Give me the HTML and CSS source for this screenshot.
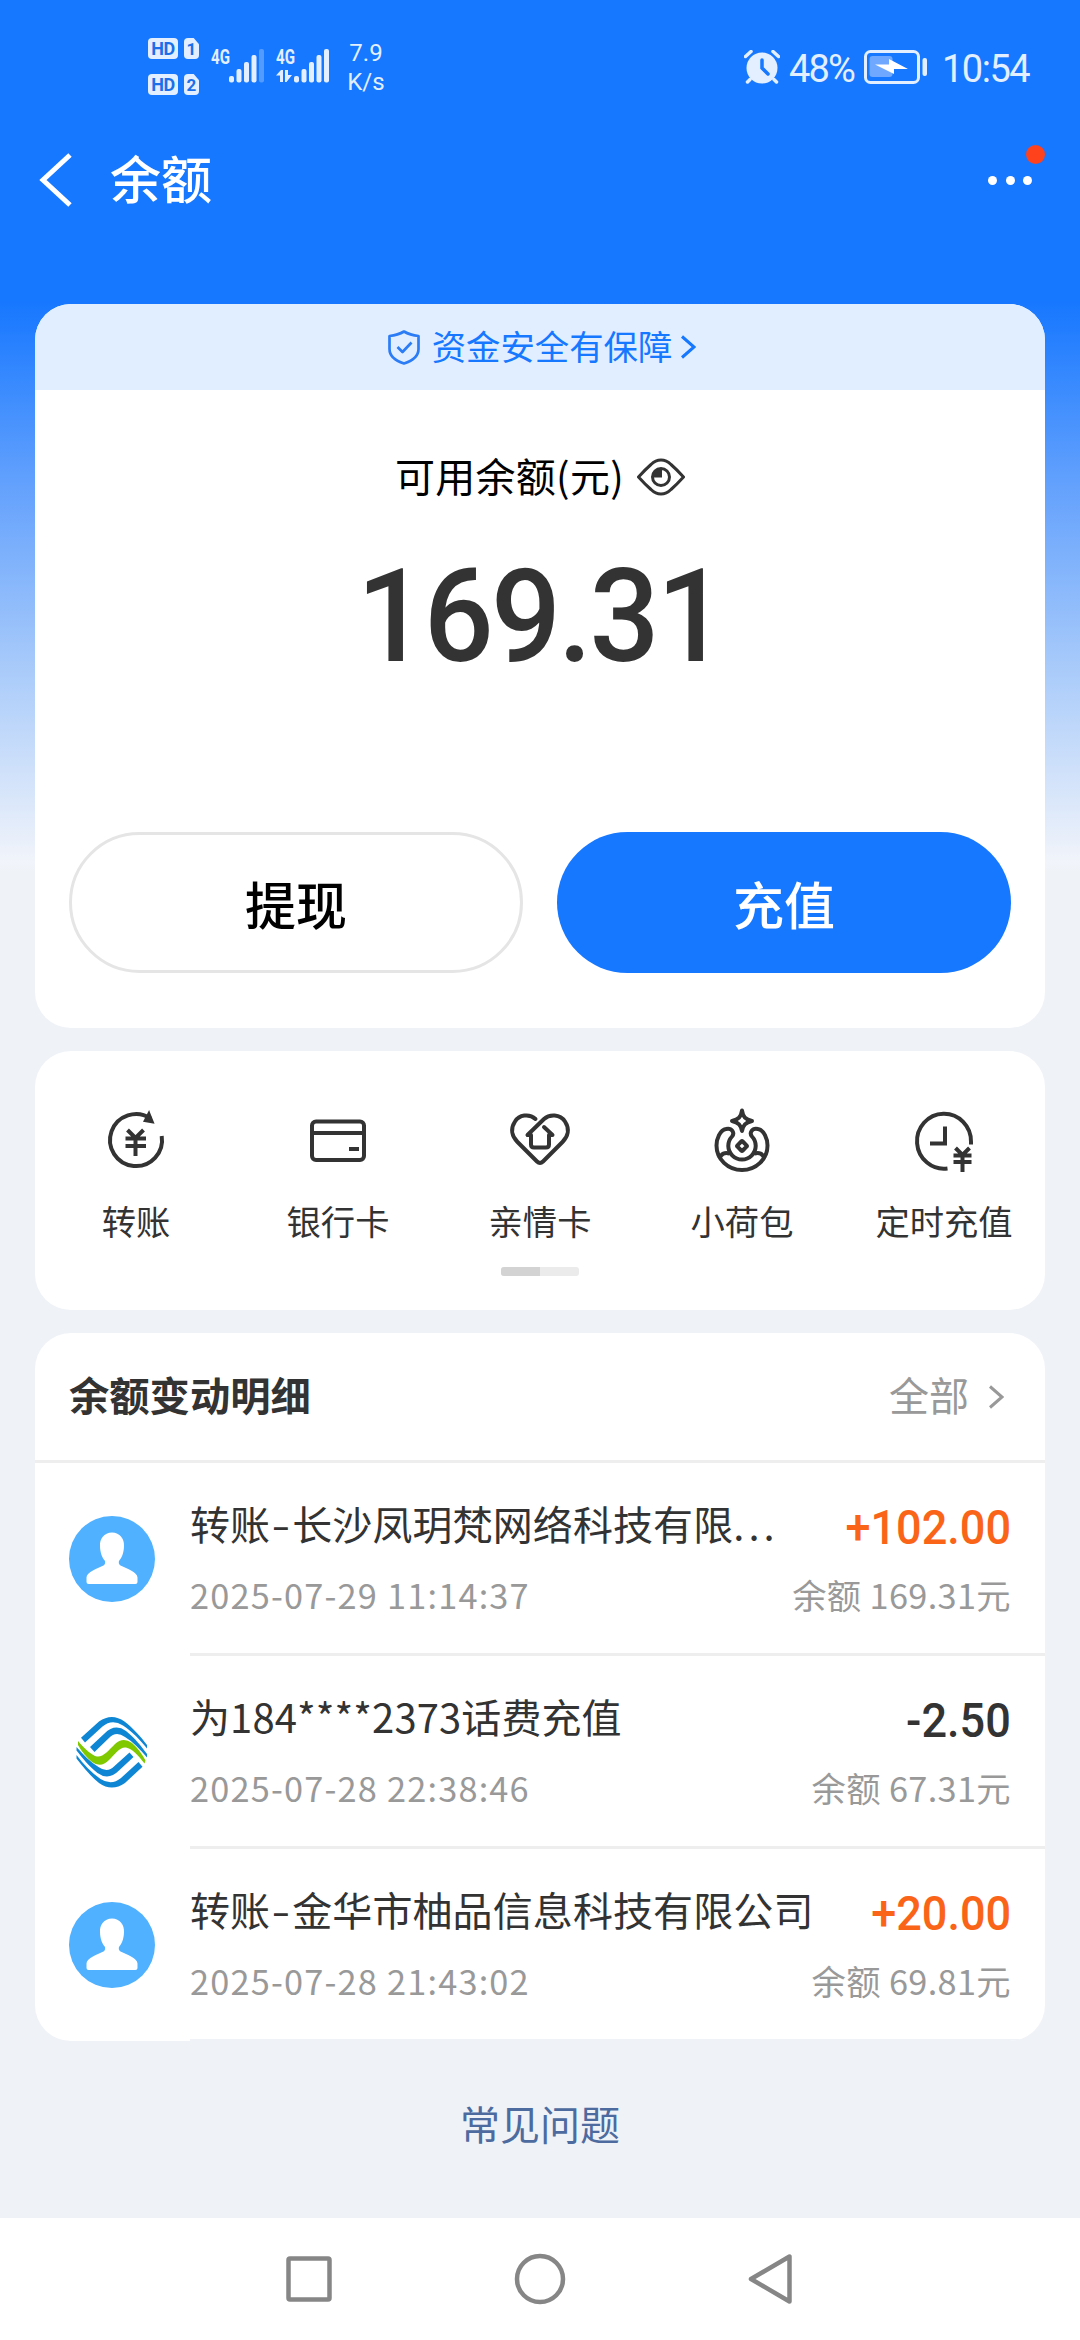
FILE: index.html
```html
<!DOCTYPE html>
<html lang="zh-CN">
<head>
<meta charset="utf-8">
<title>余额</title>
<link rel="stylesheet" href="styles.css">
</head>
<body>
<svg class="defs" width="0" height="0" aria-hidden="true">
  <symbol id="avatar" viewBox="0 0 86 86">
    <circle cx="43" cy="43" r="43" fill="#4fb1ff"/>
    <path fill="#fff" d="M43 16.500C51 16.500 55.500 23 55 30C55 37 52.500 42 50.300 44.500C49.300 46 49.800 48.500 51.500 49.500C57 52 68.500 56 68.500 61.500V66Q68.500 68 66.500 68H19.500Q17.500 68 17.500 66V61.500C17.500 56 29 52 34.500 49.500C36.200 48.500 36.700 46 35.700 44.500C33.500 42 31 37 31 30C30.500 23 35 16.500 43 16.500Z"/>
  </symbol>
  <symbol id="chevron" viewBox="0 0 18 26">
    <path d="M2 2.500 14 13 2 23.500" fill="none" stroke="currentColor" stroke-width="3"/>
  </symbol>
</svg>
<div class="screen">
  <header class="status">
    <div class="status-left">
      <div class="hd-col">
        <div class="hd-row"><span class="hd">HD</span><span class="sim">1</span></div>
        <div class="hd-row"><span class="hd">HD</span><span class="sim">2</span></div>
      </div>
      <div class="signal">
        <span class="net">4G</span>
        <svg width="54" height="34" viewBox="0 0 54 34" fill="#e3efff">
          <rect x="18" y="27" width="5" height="6.500" rx="2"/><rect x="25.500" y="20" width="5" height="13.500" rx="2"/><rect x="33" y="13" width="5" height="20.500" rx="2"/><rect x="40.500" y="6" width="5" height="27.500" rx="2"/><rect x="48" y="0" width="5" height="33.500" rx="2" opacity=".3"/>
        </svg>
      </div>
      <div class="signal second">
        <span class="net">4G</span>
        <svg width="54" height="34" viewBox="0 0 54 34" fill="#e3efff">
          <path d="M0 26.500 5 21H7V33H4V26.500ZM9 21H12V26H16L10.500 33H9Z"/>
          <rect x="18" y="27" width="5" height="6.500" rx="2"/><rect x="25.500" y="20" width="5" height="13.500" rx="2"/><rect x="33" y="13" width="5" height="20.500" rx="2"/><rect x="40.500" y="6" width="5" height="27.500" rx="2"/><rect x="48" y="0" width="5" height="33.500" rx="2"/>
        </svg>
      </div>
      <div class="speed"><span>7.9</span><span>K/s</span></div>
    </div>
    <div class="status-right">
      <svg class="alarm" width="36" height="34" viewBox="0 0 36 34">
        <circle cx="18" cy="18" r="15.500" fill="#e3efff"/>
        <path d="M1.500 6.500 7 1.500M34.500 6.500 29 1.500M6 29.500 3.500 32M30 29.500 32.500 32" stroke="#e3efff" stroke-width="3.500" stroke-linecap="round"/>
        <path d="M18 10V18L24 24" fill="none" stroke="#1677ff" stroke-width="3.500" stroke-linecap="round"/>
      </svg>
      <span class="percent">48%</span>
      <svg class="battery" width="64" height="34" viewBox="0 0 64 34">
        <rect x="1.500" y="1.500" width="53" height="31" rx="5" fill="none" stroke="#e3efff" stroke-width="3"/>
        <rect x="5.500" y="6" width="23" height="21" rx="3" fill="#6ea8ff"/>
        <path d="M11 14.500 25 14.500V9L44 19H30V24Z" fill="#fff"/>
        <rect x="58.500" y="8" width="4.500" height="18" rx="2" fill="#e3efff"/>
      </svg>
      <span class="time">10:54</span>
    </div>
  </header>

  <nav class="titlebar">
    <svg class="back" width="34" height="54" viewBox="0 0 34 54"><path d="M31 2 4 27 31 52" fill="none" stroke="#fff" stroke-width="5"/></svg>
    <h1>余额</h1>
    <div class="more"><i></i><i></i><i></i><b class="badge"></b></div>
  </nav>

  <main>
    <section class="card balance">
      <div class="guard">
        <svg width="32" height="35" viewBox="0 0 32 35" fill="none" stroke="#2c7cf6" stroke-width="2.700" stroke-linejoin="round"><path d="M16 1.500C20 4 25 5.500 30.500 6V19C30.500 26 24 31 16 33.500C8 31 1.500 26 1.500 19V6C7 5.500 12 4 16 1.500Z"/><path d="M9.500 17 14.500 22 23.500 12.500"/></svg>
        <span>资金安全有保障</span>
        <svg class="guard-arrow" width="18" height="26"><use href="#chevron"/></svg>
      </div>
      <div class="label"><span>可用余额(元)</span>
        <svg width="48" height="38" viewBox="0 0 48 38" fill="none" stroke="#333" stroke-width="3"><path stroke-linejoin="round" d="M1.500 19C6 14 10 10 14 6.500C20 .500 28 .500 34 6.500C38 10 42 14 46.500 19C42 24 38 28 34 31.500C28 37.500 20 37.500 14 31.500C10 28 6 24 1.500 19Z"/><circle cx="24" cy="19" r="8.500"/><path d="M24 12V18.500H17A7 7 0 0 1 24 12Z" fill="#333" stroke-width="2"/></svg>
      </div>
      <div class="amount">169.31</div>
      <div class="actions">
        <button class="btn ghost">提现</button>
        <button class="btn solid">充值</button>
      </div>
    </section>

    <section class="card tools">
      <div class="tool-row">
        <div class="tool">
          <svg viewBox="0 0 66 66"><path d="M47.500 10.500A26 26 0 1 0 58.700 28" /><path d="M46 4.500 50 14.500 41.500 13Z" fill="#333" stroke-width="2"/><path d="M24.500 22 32.500 30 40.500 22M22.500 30.500H43M22.500 38H43M32.500 30V48"/></svg>
          <span>转账</span>
        </div>
        <div class="tool">
          <svg viewBox="0 0 66 66"><rect x="7" y="13.500" width="52" height="38.500" rx="4"/><path d="M7 25H59M44 41H54"/></svg>
          <span>银行卡</span>
        </div>
        <div class="tool">
          <svg viewBox="0 0 66 66"><path stroke-linecap="round" stroke-linejoin="round" d="M28.500 11C22 5 12 7 8 13.500C3 21 5 28.500 10.500 34L30 53.500Q33 56.500 36 53.500L55.500 34C61 28.500 63 21 58 13.500C53 6 42.500 6 37 11L20.500 27H24V36.500Q24 39.500 27 39.500H39Q42 39.500 42 36.500V27H45.500L37 19"/></svg>
          <span>亲情卡</span>
        </div>
        <div class="tool">
          <svg viewBox="0 0 66 66" stroke-linejoin="round"><path d="M33 2.500C34 9 36.500 11.500 43 13C36.500 14.500 34 17 33 23C32 17 29.500 14.500 23 13C29.500 11.500 32 9 33 2.500Z"/><path d="M17 21C11 22 7.500 31 7.500 37.500A25.500 24.500 0 0 0 58.500 37.500C58.500 31 55 22 49 21C43 19.500 40 25 43 28.500A13.700 13.700 0 1 1 23 28.500C26 25 23 19.500 17 21Z"/><path d="M10.500 50.500C12 45.500 16 44 20.500 45.500M55.500 50.500C54 45.500 50 44 45.500 45.500"/><rect x="29.300" y="34.300" width="7.400" height="7.400" rx="1" transform="rotate(45 33 38)"/></svg>
          <span>小荷包</span>
        </div>
        <div class="tool">
          <svg viewBox="0 0 66 66"><path d="M60 36.500V34A27 27.500 0 1 0 36.500 60.500M34 18.500V35.500H19"/><path d="M44.500 40 51.500 47 58.500 40M42.500 47.500H60.500M42.500 54H60.500M51.500 47V64"/></svg>
          <span>定时充值</span>
        </div>
      </div>
      <div class="pager"><i></i></div>
    </section>

    <section class="card history">
      <div class="history-head">
        <h2>余额变动明细</h2>
        <div class="all"><span>全部</span><svg width="18" height="26"><use href="#chevron"/></svg></div>
      </div>
      <div class="entry">
        <svg class="pic" viewBox="0 0 86 86"><use href="#avatar"/></svg>
        <div class="entry-body">
          <div class="line"><span class="name">转账<span class="dash">-</span>长沙凤玥梵网络科技有限<span class="dots">...</span></span><strong class="in">+102.00</strong></div>
          <div class="line meta"><span class="date">2025-07-29 11:14:37</span><span>余额 169.31元</span></div>
        </div>
      </div>
      <div class="entry">
        <svg class="pic" viewBox="0 0 86 86">
          <g fill="#0e86d4">
            <path d="M12 28.700 30 12.500Q42.800 3.500 55.500 12.500C64 19 72 28 78 36V39.500C71 31 64 23 54 16.500Q43 9.500 33.500 17.500L16 33.500Z"/>
            <path d="M21 38 35.500 24.500Q46 14 57 22C66 29 72 37 78 45V48.500C71 40 64 33 56 28Q47 21.500 40 29L25.500 43Z"/>
            <path d="M73.500 57.700 56 74Q42.800 83 30 74C21.500 67.500 13.500 57 7.500 49.500V46C14.500 55 22 63.500 31.500 70Q42.500 77 52 69L69.500 53Z"/>
            <path d="M64.500 48 50 61.500Q39.500 72 28.500 64C19.500 57 13.500 49 7.500 41.500V38C14.500 46 21.500 53 29.500 58Q38.500 64.500 45.500 57L60.500 43.500Z"/>
          </g>
          <path fill="#80c800" d="M9 32C16 40 23 46.500 28 47.500C34 48.500 40 41 46 35Q54 27.500 63 34C69 39 73 45 76.500 51.500L75.500 54.500C69 46 63 39.500 57 38.500C51 37.500 46 45 40 51Q32 59.500 23 53C17 48 13 43 9 36Z"/>
        </svg>
        <div class="entry-body">
          <div class="line"><span class="name">为184****2373话费充值</span><strong>-2.50</strong></div>
          <div class="line meta"><span class="date">2025-07-28 22:38:46</span><span>余额 67.31元</span></div>
        </div>
      </div>
      <div class="entry">
        <svg class="pic" viewBox="0 0 86 86"><use href="#avatar"/></svg>
        <div class="entry-body">
          <div class="line"><span class="name">转账<span class="dash">-</span>金华市柚品信息科技有限公司</span><strong class="in">+20.00</strong></div>
          <div class="line meta"><span class="date">2025-07-28 21:43:02</span><span>余额 69.81元</span></div>
        </div>
      </div>
    </section>
    <a class="faq">常见问题</a>
  </main>

  <footer class="navkeys">
    <svg viewBox="0 0 54 54"><rect x="6.500" y="6.500" width="41" height="41" rx="1.500"/></svg>
    <svg viewBox="0 0 54 54"><circle cx="27" cy="27" r="23"/></svg>
    <svg viewBox="0 0 54 54"><path stroke-linejoin="round" d="M45.500 4.500V49.500L7 27Z"/></svg>
  </footer>
</div>
</body>
</html>
```
FILE: styles.css
```css
* { box-sizing: border-box; margin: 0; padding: 0; }
body { font-family: "Noto Sans CJK SC", sans-serif; color: #333; }
svg { display: block; flex: none; }
.defs { position: absolute; }
.screen {
  width: 1080px; height: 2340px; overflow: hidden;
  display: flex; flex-direction: column;
  background: linear-gradient(#1677ff 0, #1677ff 300px, #61a0fd 480px, #a9cbfa 670px, #f1f4fa 862px, #eff2f7 872px);
}

.status { height: 134px; padding: 38px 50px 0 148px; display: flex; justify-content: space-between; color: #e3efff; font-family: Roboto, sans-serif; }
.status-left, .status-right { display: flex; align-items: flex-start; }
.hd-col { display: flex; flex-direction: column; gap: 15px; width: 63px; }
.hd-row { display: flex; gap: 6px; height: 21px; }
.hd, .sim { background: #e3efff; color: #1c6fe8; border-radius: 4px; font-weight: 700; text-align: center; line-height: 22px; }
.hd { width: 30px; font-size: 18px; letter-spacing: -.5px; }
.sim { width: 15px; font-size: 17px; clip-path: polygon(0 0, 65% 0, 100% 30%, 100% 100%, 0 100%); }
.signal { display: grid; margin-top: 11px; width: 54px; }
.signal > * { grid-area: 1 / 1; }
.signal.second { margin-left: 11px; }
.net { font-size: 21px; line-height: 16px; font-weight: 700; transform: scaleX(.72); transform-origin: 0 0; width: 26px; }
.speed { display: flex; flex-direction: column; align-items: center; margin: 1px 0 0 17px; width: 38px; font-size: 24px; line-height: 28.500px; }
.alarm { margin-top: 12px; }
.percent, .time { font-size: 38px; line-height: 44px; margin-top: 9px; white-space: nowrap; }
.percent { width: 75px; padding-left: 9px; letter-spacing: -1.800px; }
.battery { margin: 12px 0 0 9px; }
.time { width: 88px; margin-left: 14px; letter-spacing: -1.500px; }

.titlebar { height: 170px; padding: 0 48px 0 39px; display: flex; align-items: flex-start; }
.back { margin-top: 19px; }
.titlebar h1 { color: #fff; font-size: 51px; line-height: 72px; font-weight: 500; margin: 7px 0 0 37px; flex: 1; }
.more { position: relative; display: flex; gap: 8.300px; margin-top: 42px; }
.more i { width: 9px; height: 9px; border-radius: 50%; background: #fff; }
.badge { position: absolute; width: 19px; height: 19px; border-radius: 50%; background: #ff411c; right: -13px; top: -31px; }

main { padding: 0 35px; flex: 1; display: flex; flex-direction: column; }
.card { background: #fff; border-radius: 36px; overflow: hidden; flex: none; }
.balance { height: 724px; display: flex; flex-direction: column; align-items: center; }
.guard { height: 86px; width: 100%; background: #e1eeff; color: #1677ff; display: flex; align-items: center; justify-content: center; font-size: 34.400px; line-height: 50px; gap: 12px; padding-left: 6px; }
.guard span { margin-top: -4px; }
.guard-arrow { margin-left: -4px; }
.label { display: flex; align-items: center; margin-top: 57px; height: 60px; color: #000; font-size: 40px; line-height: 60px; gap: 13px; }
.label span { margin-top: -5px; letter-spacing: .3px; }
.amount { font: 500 129px/150px Roboto, sans-serif; letter-spacing: -3px; margin-top: 35px; transform: scaleX(.955); }
.actions { display: grid; grid-template-columns: 454px 454px; gap: 34px; margin-top: 140px; }
.btn { height: 141px; border-radius: 71px; font: 500 51px/76px "Noto Sans CJK SC", sans-serif; }
.ghost { background: #fff; border: 3px solid #e5e5e5; color: #000; }
.solid { background: #1677ff; border: 0; color: #fff; }

.tools { height: 259px; margin-top: 23px; padding-top: 57px; }
.tool-row { display: grid; grid-template-columns: repeat(5, 1fr); }
.tool { display: flex; flex-direction: column; align-items: center; font-size: 34.300px; line-height: 50px; white-space: nowrap; }
.tool svg { width: 66px; height: 66px; fill: none; stroke: #333; stroke-width: 4; }
.tool span { margin-top: 21px; }
.pager { width: 78px; height: 9px; border-radius: 3px; background: #ebebeb; margin: 22px auto 0; overflow: hidden; }
.pager i { display: block; width: 39px; height: 9px; background: #d3d3d3; }

.history { height: 708px; margin-top: 23px; }
.history-head { height: 130px; padding: 0 39px 0 34px; display: flex; justify-content: space-between; align-items: center; border-bottom: 3px solid #eee; }
.history-head h2 { font-size: 40.300px; line-height: 60px; font-weight: 700; margin-top: -5px; }
.all { display: flex; align-items: center; gap: 19px; color: #999; font-size: 40px; line-height: 60px; }
.all span { margin-top: -5px; }
.entry { display: flex; height: 193px; padding-left: 34px; }
.pic { width: 86px; height: 86px; margin-top: 53px; }
.entry-body { margin-left: 35px; flex: 1; padding: 30px 34px 0 0; border-bottom: 3px solid #eee; }
.entry:last-child .entry-body { border-color: #eff2f7; }
.line { display: flex; justify-content: space-between; height: 60px; line-height: 60px; font-size: 40px; white-space: nowrap; }
.line strong { font: 500 49px/69px Roboto, sans-serif; transform: scaleX(.92); transform-origin: 100% 0; }
.line .in { color: #fa6419; }
.dash { display: inline-block; width: 22px; text-align: center; transform: scaleX(1.35); }
.name { letter-spacing: .1px; }
.dots { letter-spacing: 4px; }
.meta { margin-top: 15px; height: 52px; line-height: 52px; font-size: 34.300px; color: #999; letter-spacing: .35px; }
.date { letter-spacing: 1.200px; }
.faq { align-self: center; margin-top: 52px; color: #4d6b9f; font-size: 40px; line-height: 60px; }

.navkeys { height: 122px; background: #fff; display: flex; justify-content: center; gap: 177px; padding-top: 34px; }
.navkeys svg { width: 54px; height: 54px; fill: none; stroke: #868686; stroke-width: 4.500; }
```
